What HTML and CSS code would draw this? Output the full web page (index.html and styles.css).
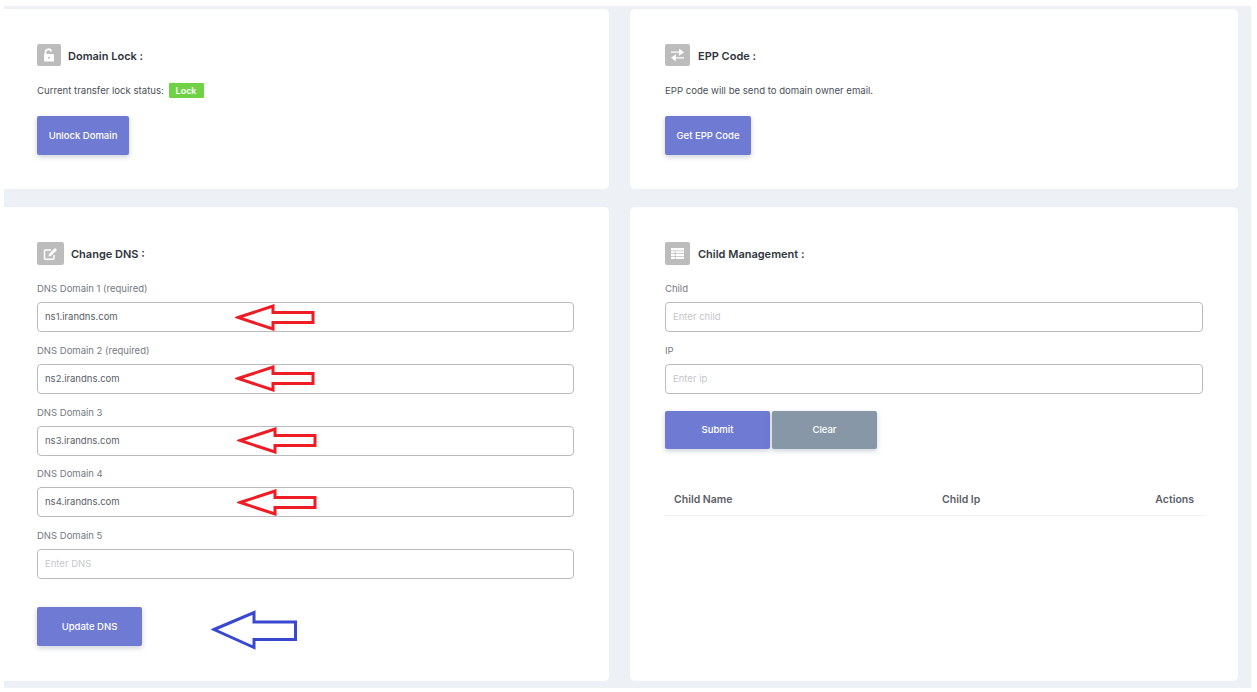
FILE: index.html
```html
<!DOCTYPE html>
<html lang="en">
<head>
<meta charset="utf-8">
<title>Domain Settings</title>
<link rel="stylesheet" href="styles.css">
</head>
<body>
<main class="board">
  <section class="card card-top">
    <h2 class="title">
      <span class="ico ico-a"><svg width="14" height="14" viewBox="0 0 14 14"><path d="M3.500 6.200V4.200a2.900 2.900 0 0 1 5.700-.8" fill="none" stroke="#fff" stroke-width="1.800"/><rect x="2" y="6" width="10" height="7.500" rx="1" fill="#fff"/><circle cx="7" cy="9.700" r="1" fill="#bbb"/></svg></span>
      <span class="ttl">Domain Lock :</span>
    </h2>
    <p class="line">Current transfer lock status: <span class="badge">Lock</span></p>
    <button class="btn btn-unlock">Unlock Domain</button>
  </section>
  <section class="card card-top">
    <h2 class="title">
      <span class="ico ico-b"><svg width="15" height="12" viewBox="0 0 15 12"><path d="M1 3.200h10M9.600 .8l3.400 2.400-3.400 2.400z M14 8.800H4M5.400 6.400L2 8.800l3.400 2.400z" fill="#fff" stroke="#fff" stroke-width="1.200"/></svg></span>
      <span class="ttl">EPP Code :</span>
    </h2>
    <p class="line">EPP code will be send to domain owner email.</p>
    <button class="btn btn-epp">Get EPP Code</button>
  </section>
  <section class="card card-dns">
    <h2 class="title title-dns">
      <span class="ico ico-c"><svg width="15" height="14" viewBox="0 0 15 14"><path d="M11 8v3.200a1 1 0 0 1-1 1H2.500a1 1 0 0 1-1-1V4a1 1 0 0 1 1-1h5.500" fill="none" stroke="#fff" stroke-width="1.500"/><path d="M5.500 9.500l.5-2.500 6-6 2 2-6 6z" fill="#fff"/></svg></span>
      <span class="ttl">Change DNS :</span>
    </h2>
    <div class="field"><label>DNS Domain 1 (required)</label><input class="inp" value="ns1.irandns.com"></div>
    <div class="field"><label>DNS Domain 2 (required)</label><input class="inp" value="ns2.irandns.com"></div>
    <div class="field"><label>DNS Domain 3</label><input class="inp" value="ns3.irandns.com"></div>
    <div class="field"><label>DNS Domain 4</label><input class="inp" value="ns4.irandns.com"></div>
    <div class="field"><label>DNS Domain 5</label><input class="inp" placeholder="Enter DNS"></div>
    <button class="btn btn-wide btn-update">Update DNS</button>
    <svg class="arrow a1" width="82" height="27" viewBox="0 0 82 27"><path d="M3 13.500L38 2v6.500h40v10H38V25z" fill="none" stroke="#ee1c25" stroke-width="3"/></svg>
    <svg class="arrow a2" width="82" height="27" viewBox="0 0 82 27"><path d="M3 13.500L38 2v6.500h40v10H38V25z" fill="none" stroke="#ee1c25" stroke-width="3"/></svg>
    <svg class="arrow a3" width="82" height="27" viewBox="0 0 82 27"><path d="M3 13.500L38 2v6.500h40v10H38V25z" fill="none" stroke="#ee1c25" stroke-width="3"/></svg>
    <svg class="arrow a4" width="82" height="27" viewBox="0 0 82 27"><path d="M3 13.500L38 2v6.500h40v10H38V25z" fill="none" stroke="#ee1c25" stroke-width="3"/></svg>
    <svg class="arrow a5" width="88" height="40" viewBox="0 0 88 40"><path d="M3 19.500L43 2.500v9.500h41.500v17.500H43v8z" fill="none" stroke="#3a48cf" stroke-width="3"/></svg>
  </section>
  <section class="card card-dns">
    <h2 class="title title-dns">
      <span class="ico ico-d"><svg width="13" height="11" viewBox="0 0 13 11"><path fill="#fff" d="M0 0h13v2.500H0zM0 3.200h3.800v2.100H0zM4.500 3.200h8.500v2.100H4.500zM0 6h3.800v2.100H0zM4.500 6h8.500v2.100H4.500zM0 8.800h3.800V11H0zM4.500 8.800h8.500V11H4.500z"/></svg></span>
      <span class="ttl">Child Management :</span>
    </h2>
    <div class="field"><label>Child</label><input class="inp" placeholder="Enter child"></div>
    <div class="field"><label>IP</label><input class="inp" placeholder="Enter ip"></div>
    <div class="actions">
      <button class="btn btn-wide">Submit</button>
      <button class="btn btn-wide btn-clear">Clear</button>
    </div>
    <table class="tbl">
      <thead><tr><th class="c1">Child Name</th><th class="c2">Child Ip</th><th class="c3">Actions</th></tr></thead>
    </table>
  </section>
</main>
</body>
</html>
```
FILE: styles.css
```css
* { box-sizing: border-box; }
html, body { margin: 0; padding: 0; background: #fff; }
body { font-family: "Inter", "Roboto", "Liberation Sans", sans-serif; color: #4a5058; overflow: hidden; }
.board {
  margin: 6px 6px 0 4px;
  height: 682px;
  padding: 3px 13px 0 0;
  background: #edf0f5;
  display: grid;
  grid-template-columns: 605px 608px;
  grid-template-rows: 180px 474px;
  column-gap: 21px;
  row-gap: 18px;
}
.card { background: #fff; border-radius: 0 5px 5px 0; padding: 35px 35px 0 33px; position: relative; }
.card:nth-child(even) { border-radius: 5px; padding-left: 35px; }
.title { margin: 0; display: flex; align-items: center; font-size: 11px; font-weight: 600; color: #2f3640; height: 22px; gap: 7px; }
.title-dns { height: 23px; }
.ttl { position: relative; top: 1px; }
.title-dns .ttl { top: 0; }
.card:nth-child(even) .title { gap: 8px; }
.ico { display: flex; align-items: center; justify-content: center; height: 100%; background: #bcbcbc; border-radius: 2px; flex: none; }
.ico-a { width: 24px; }
.ico-b, .ico-d { width: 25px; }
.ico-c { width: 27px; }
.line { margin: 17px 0 0; font-size: 9.600px; line-height: 15px; height: 15px; color: #4a5058; }
.badge { display: inline-block; background: #6fd144; color: #fff; font-weight: 600; font-size: 9px; line-height: 15px; width: 35px; text-align: center; border-radius: 1px; margin-left: 2px; }
.btn { display: block; height: 39px; border: 0; border-radius: 2px; background: #6f7bd3; color: #fff; font: 500 9.500px "Inter", "Roboto", sans-serif; box-shadow: 0 2px 5px rgba(60,70,110,.25); padding: 0 0 1px; }
.card-top .btn { margin-top: 18px; }
.btn-unlock { width: 92px; }
.btn-epp { width: 86px; }
.btn-wide { width: 105px; }
.btn-update { margin-top: 27.800px; padding-bottom: 0; }
.btn-clear { background: #8797a8; }
.card-dns { padding-top: 35px; }
.field { margin-top: 16px; }
.field:nth-of-type(n+2) { margin-top: 10.750px; }
.field label { display: block; font-size: 9.500px; line-height: 14px; color: #747a82; padding-top: 1px; height: 21px; }
.inp { display: block; width: 537px; height: 30px; border: 1px solid #b9bbbd; border-radius: 4px; padding: 0 7px 1px; font: 400 9.500px "Inter", "Roboto", sans-serif; color: #5a6068; background: #fff; outline: none; }
.card:nth-child(even) .inp { width: 538px; }
.inp::placeholder { color: #c4c7cb; opacity: 1; }
.actions { display: flex; gap: 2px; margin-top: 17px; }
.actions .btn { height: 38px; }
.tbl { width: 538px; margin-top: 34px; border-collapse: collapse; table-layout: fixed; }
.tbl th { font-size: 10.500px; font-weight: 600; color: #5b6068; height: 33px; padding: 0 9px 0 9px; border-bottom: 1px solid #eceef1; }
.tbl .c1 { text-align: left; width: 268px; }
.tbl .c2 { text-align: left; width: 160px; }
.tbl .c3 { text-align: right; }
.arrow { position: absolute; }
.a1 { left: 231px; top: 97px; }
.a2 { left: 231px; top: 158px; }
.a3 { left: 233px; top: 220px; }
.a4 { left: 233px; top: 282px; }
.a5 { left: 207px; top: 403px; }
```
